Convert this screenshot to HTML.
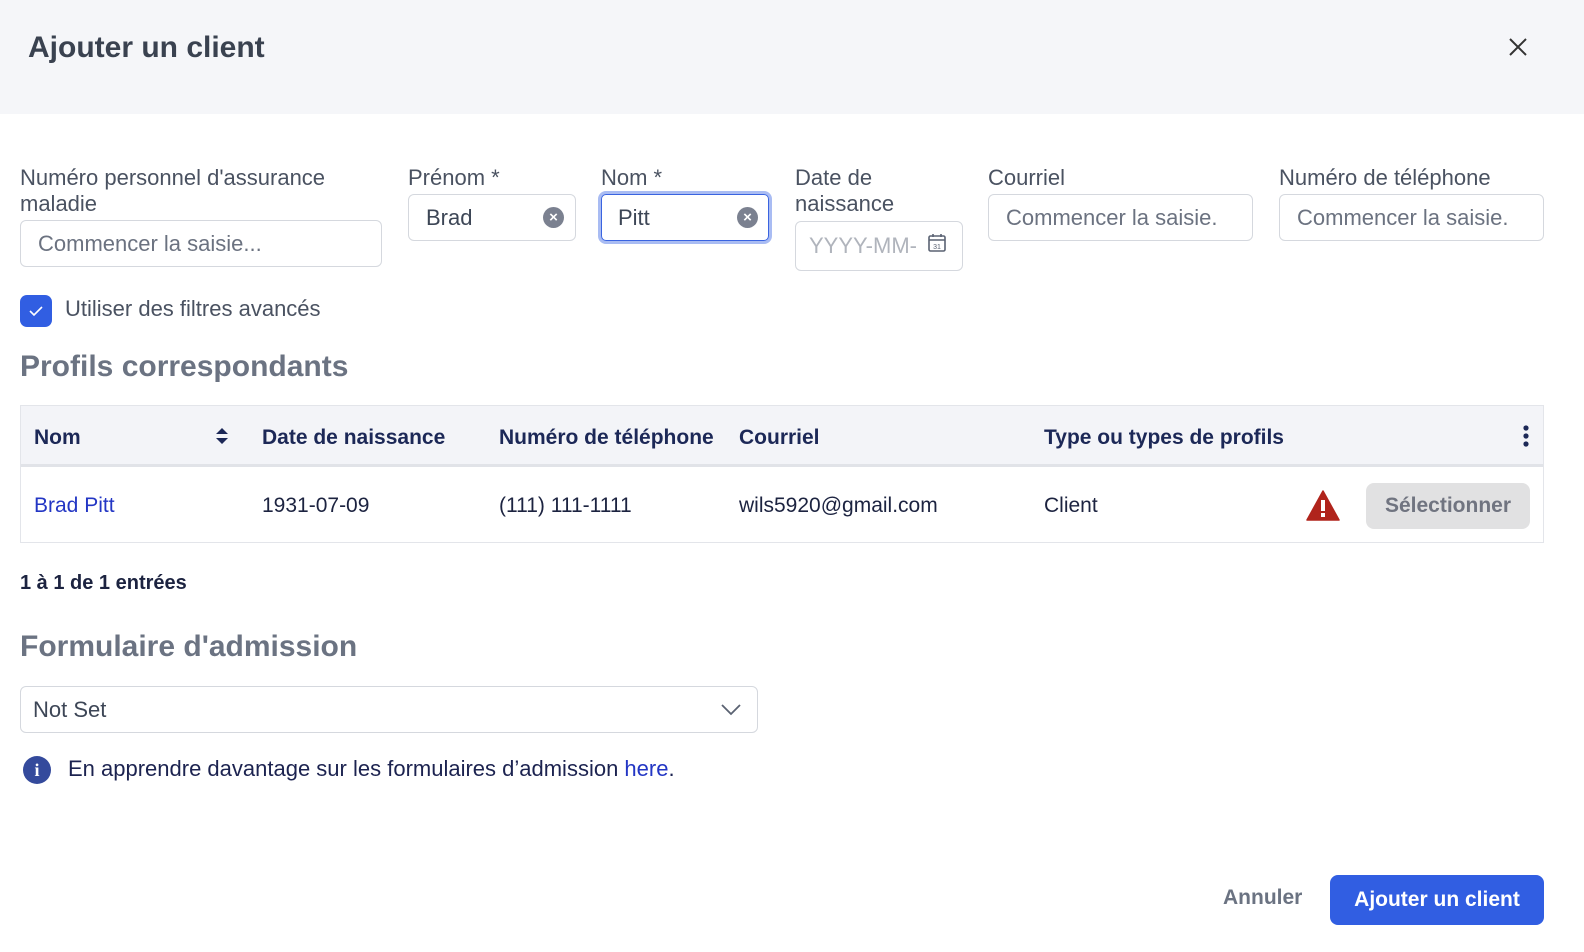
<!DOCTYPE html>
<html><head><meta charset="utf-8"><style>
*{box-sizing:border-box;margin:0;padding:0}
body{width:1584px;height:952px;background:#fff;font-family:"Liberation Sans",sans-serif;position:relative;overflow:hidden;color:#3d4656}
.a{position:absolute;white-space:nowrap}
.lbl{font-size:22px;color:#4a5261;line-height:26px}
.in{position:absolute;border:1px solid #d5d8de;border-radius:6px;background:#fff;font-size:22px;color:#6b7280;padding-left:17px;display:flex;align-items:center}
.th{font-size:21px;font-weight:bold;color:#1c2857}
.td{font-size:21px;color:#1c2340}
.x{position:absolute;width:21px;height:21px;border-radius:50%;background:#7b8190;color:#fff;font-size:15px;font-weight:bold;text-align:center;line-height:21px}
</style></head><body>
<div class="a" style="left:0;top:0;width:1584px;height:114px;background:#f5f6f9"></div>
<div class="a" style="left:28px;top:31px;font-size:30px;font-weight:bold;color:#3a4250">Ajouter un client</div>
<svg class="a" style="left:1509px;top:38px" width="18" height="18"><path d="M1 1L17 17M17 1L1 17" stroke="#333" stroke-width="2"/></svg>

<div class="a lbl" style="left:20px;top:165px">Numéro personnel d'assurance<br>maladie</div>
<div class="in" style="left:20px;top:220px;width:362px;height:47px">Commencer la saisie...</div>

<div class="a lbl" style="left:408px;top:165px">Prénom *</div>
<div class="in" style="left:408px;top:194px;width:168px;height:47px;color:#3d4656">Brad</div>
<div class="x" style="left:543px;top:207px">×</div>

<div class="a lbl" style="left:601px;top:165px">Nom *</div>
<div class="in" style="left:598px;top:191px;width:174px;height:53px;border:3px solid #a9bcf3;border-radius:8px;padding:0">
<div style="width:100%;height:100%;border:1px solid #3a64e0;border-radius:5px;padding-left:16px;display:flex;align-items:center;color:#3d4656">Pitt</div></div>
<div class="x" style="left:737px;top:207px">×</div>

<div class="a lbl" style="left:795px;top:165px">Date de<br>naissance</div>
<div class="in" style="left:795px;top:221px;width:168px;height:50px;color:#b0b4bc;padding-left:13px">YYYY-MM-</div>
<svg class="a" style="left:927px;top:233px" width="20" height="20" viewBox="0 0 20 20"><rect x="2" y="3" width="16" height="15" rx="1.5" fill="none" stroke="#5a6272" stroke-width="1.6"/><path d="M2 7H18M6 1V4M14 1V4" stroke="#5a6272" stroke-width="1.6"/><text x="10" y="16" font-size="7" text-anchor="middle" fill="#5a6272" font-family="Liberation Sans">31</text></svg>

<div class="a lbl" style="left:988px;top:165px">Courriel</div>
<div class="in" style="left:988px;top:194px;width:265px;height:47px">Commencer la saisie.</div>

<div class="a lbl" style="left:1279px;top:165px">Numéro de téléphone</div>
<div class="in" style="left:1279px;top:194px;width:265px;height:47px">Commencer la saisie.</div>

<div class="a" style="left:20px;top:295px;width:32px;height:32px;border-radius:7px;background:#315ee2"></div>
<svg class="a" style="left:27px;top:303px" width="18" height="16"><path d="M3 8L7 12L15 4" stroke="#fff" stroke-width="1.6" fill="none"/></svg>
<div class="a lbl" style="left:65px;top:296px">Utiliser des filtres avancés</div>

<div class="a" style="left:20px;top:350px;font-size:30px;font-weight:bold;color:#6b7382">Profils correspondants</div>

<div class="a" style="left:20px;top:405px;width:1524px;height:138px;border:1px solid #e3e5ea"></div>
<div class="a" style="left:21px;top:406px;width:1522px;height:61px;background:#f3f4f8;border-bottom:3px solid #e1e3e8"></div>
<div class="a th" style="left:34px;top:426px">Nom</div>
<svg class="a" style="left:215px;top:427px" width="14" height="18"><path d="M1 7L7 1L13 7Z M1 11L7 17L13 11Z" fill="#1c2857"/></svg>
<div class="a th" style="left:262px;top:426px">Date de naissance</div>
<div class="a th" style="left:499px;top:426px">Numéro de téléphone</div>
<div class="a th" style="left:739px;top:426px">Courriel</div>
<div class="a th" style="left:1044px;top:426px">Type ou types de profils</div>
<svg class="a" style="left:1521px;top:425px" width="10" height="22"><circle cx="5" cy="3" r="2.6" fill="#1c2857"/><circle cx="5" cy="11" r="2.6" fill="#1c2857"/><circle cx="5" cy="19" r="2.6" fill="#1c2857"/></svg>

<div class="a td" style="left:34px;top:494px;color:#2336c4">Brad Pitt</div>
<div class="a td" style="left:262px;top:494px">1931-07-09</div>
<div class="a td" style="left:499px;top:494px">(111) 111-1111</div>
<div class="a td" style="left:739px;top:494px">wils5920@gmail.com</div>
<div class="a td" style="left:1044px;top:494px">Client</div>
<svg class="a" style="left:1306px;top:490px" width="34" height="31" viewBox="0 0 34 31"><path d="M17 1L33 30H1Z" fill="#b0241c" stroke="#b0241c" stroke-width="1.5" stroke-linejoin="round"/><rect x="15" y="10" width="4" height="11" fill="#fff"/><rect x="15" y="23" width="4" height="4" fill="#fff"/></svg>
<div class="a" style="left:1366px;top:483px;width:164px;height:46px;border-radius:8px;background:#e1e1e2;color:#707480;font-size:21px;font-weight:bold;text-align:center;line-height:46px">Sélectionner</div>

<div class="a" style="left:20px;top:572px;font-size:20px;font-weight:bold;color:#1c2340">1 à 1 de 1 entrées</div>

<div class="a" style="left:20px;top:630px;font-size:30px;font-weight:bold;color:#6b7382">Formulaire d'admission</div>
<div class="in" style="left:20px;top:686px;width:738px;height:47px;color:#3d4656;padding-left:12px">Not Set</div>
<svg class="a" style="left:721px;top:704px" width="20" height="12"><path d="M1 1L10 10L19 1" stroke="#5a6272" stroke-width="1.8" fill="none"/></svg>

<div class="a" style="left:23px;top:756px;width:28px;height:28px;border-radius:50%;background:#344a9c;color:#fff;font-weight:bold;font-size:18px;text-align:center;line-height:28px;font-family:'Liberation Serif',serif">i</div>
<div class="a" style="left:68px;top:756px;font-size:22px;color:#1c2350">En apprendre davantage sur les formulaires d’admission <span style="color:#2336c4">here</span>.</div>

<div class="a" style="left:1223px;top:886px;font-size:21px;font-weight:bold;color:#6b7382">Annuler</div>
<div class="a" style="left:1330px;top:875px;width:214px;height:50px;border-radius:8px;background:#315ee2;color:#fff;font-size:21px;font-weight:bold;text-align:center;line-height:50px">Ajouter un client</div>
</body></html>
